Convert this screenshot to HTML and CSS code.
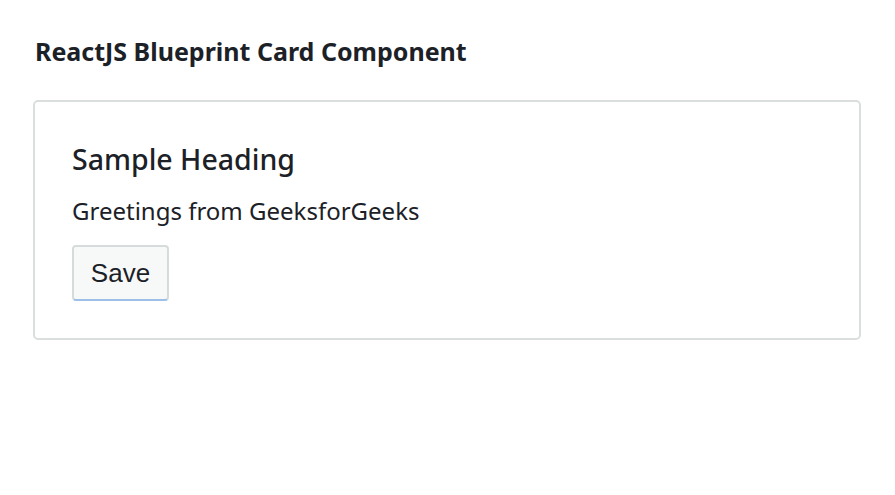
FILE: index.html
```html
<!DOCTYPE html>
<html>
<head>
<meta charset="utf-8">
<link rel="stylesheet" href="styles.css">
</head>
<body>
<div class="app">
  <h4 class="title">ReactJS Blueprint Card Component</h4>
  <div class="card">
    <h5 class="card-heading">Sample Heading</h5>
    <p class="card-text">Greetings from GeeksforGeeks</p>
    <button class="btn" type="button">Save</button>
  </div>
</div>
</body>
</html>
```

FILE: styles.css
```css
html, body {
  margin: 0;
  padding: 0;
  background: #ffffff;
}
body {
  font-family: "Noto Sans", "Open Sans", sans-serif;
  color: #1c2127;
}
.app {
  padding: 34px 35px 0 33px;
}
.title {
  margin: 0 0 0 2px;
  font-size: 25px;
  font-weight: 700;
  line-height: 34px;
}
.card {
  margin-top: 32px;
  width: 828px;
  height: 240px;
  box-sizing: border-box;
  border: 2px solid #dadede;
  border-radius: 5px;
  padding: 37px 37px;
}
.card-heading {
  margin: 0;
  font-size: 28.5px;
  font-weight: 500;
  line-height: 40px;
}
.card-text {
  margin: 16px 0 0;
  font-size: 24px;
  line-height: 32px;
}
.btn {
  margin-top: 18px;
  width: 97px;
  height: 56px;
  border: 2px solid #d6dbdb;
  border-bottom-color: #9dc0e8;
  border-radius: 4px;
  background: #f6f9f8;
  font-family: "Liberation Sans", Arial, sans-serif;
  font-size: 26px;
  color: #1c2127;
  padding: 0;
}
```
